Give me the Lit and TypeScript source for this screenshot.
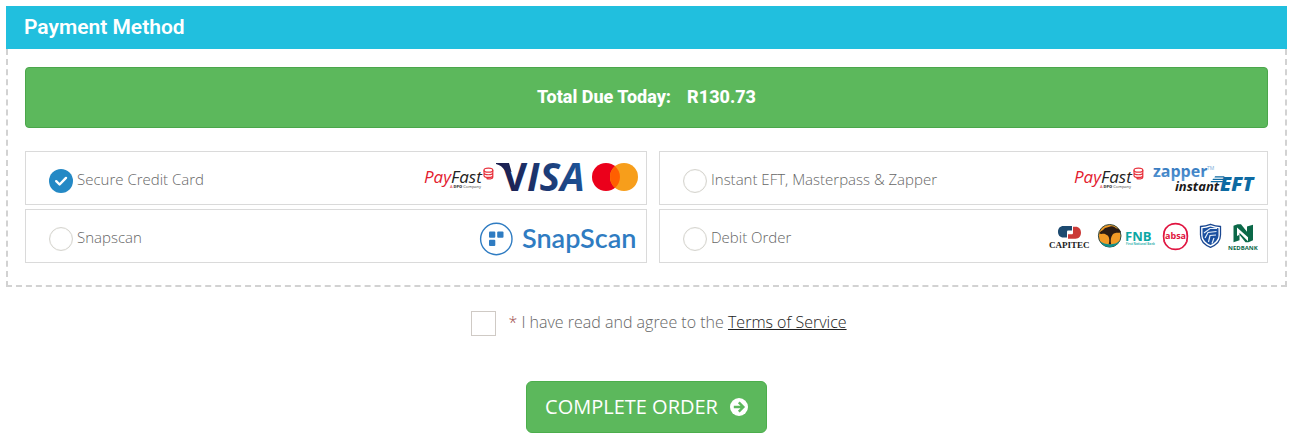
import { LitElement, html, svg, css } from "lit";
import { customElement, state } from "lit/decorators.js";

const payFast = svg`
  <text x="6" y="31" class="pf"><tspan fill="#e3202f">Pay</tspan><tspan fill="#222">Fast</tspan></text>
  <text x="32" y="36" class="tiny" fill="#444"><tspan fill="#e3202f">A</tspan> <tspan font-weight="800">DPO</tspan> Company</text>
  <g fill="none" stroke="#e8313c" stroke-width="1.2">
    <ellipse cx="70.4" cy="18.2" rx="4.4" ry="2" />
    <path d="M66 18.200v2.600c0 2.600 8.800 2.600 8.800 0v-2.600M66 21.400v2c0 2.600 8.800 2.600 8.800 0v-2.200M68.500 26.400c2 1 6.300.6 6.300-1.200v-1.600" />
  </g>`;

const cardLogos = html`<svg class="logo" width="220" height="52" viewBox="0 0 220 52" role="img" aria-label="PayFast, Visa, Mastercard">
  <defs>
    <linearGradient id="visa" gradientUnits="userSpaceOnUse" x1="84" x2="166" y1="39" y2="11">
      <stop offset="0" stop-color="#1c1c4c" />
      <stop offset="1" stop-color="#1d569b" />
    </linearGradient>
  </defs>
  ${payFast}
  <path d="M78 11h13l2.500 9-6.500-1.500C84.500 15 82 13 78 12z" fill="#1c1f50" />
  <g fill="url(#visa)">
    <text x="84" y="39" class="visa-v">V</text>
    <text x="109" y="39" class="visa">ISA</text>
  </g>
  <circle cx="188" cy="25" r="14" fill="#eb001b" />
  <circle cx="206" cy="25" r="14" fill="#f79e1b" />
  <path d="M197 14.300a14 14 0 0 1 0 21.400a14 14 0 0 1 0-21.400z" fill="#ff5f00" />
</svg>`;

const snapLogo = html`<svg class="logo" width="160" height="52" viewBox="0 0 160 52" role="img" aria-label="SnapScan">
  <circle cx="18.300" cy="29" r="15.700" fill="none" stroke="#2f7cc2" stroke-width="1.400" />
  <g fill="#2f7cc2">
    <rect x="11" y="21.500" width="6.300" height="6.300" rx="1" />
    <rect x="19.200" y="21.500" width="6.300" height="6.300" rx="1" />
    <rect x="11" y="29.800" width="6.300" height="6.300" rx="1" />
    <text x="44" y="38" class="snap">SnapScan</text>
  </g>
</svg>`;

const eftLogos = html`<svg class="logo" width="190" height="52" viewBox="0 0 190 52" role="img" aria-label="PayFast, Zapper, Instant EFT">
  <defs>
    <linearGradient id="zap" x1="0" x2="0" y1="0" y2="1">
      <stop offset="0" stop-color="#2369b4" />
      <stop offset="1" stop-color="#5c9bd6" />
    </linearGradient>
  </defs>
  <g transform="translate(-1 0)">${payFast}</g>
  <text x="84" y="25" class="zapper" fill="url(#zap)">zapper</text>
  <text x="138" y="18" class="tm" fill="#78add8">TM</text>
  <text x="106" y="39" class="instant" fill="#1a1a1a">instant</text>
  <g fill="#0e6aa2">
    <path d="M146 24.200h9.500l-.5 1.300h-9.500zM144 26.700h11l-.5 1.200h-11zM142 29.100h12l-.4 1.100h-12z" />
    <text x="151" y="39" class="eft">EFT</text>
  </g>
</svg>`;

const bankLogos = html`<svg class="logo" width="220" height="52" viewBox="0 0 220 52" role="img" aria-label="Capitec, FNB, Absa, Standard Bank, Nedbank">
  <path d="M24.500 16H33v4.500h-3.500c-1 0-1.500.4-1.500 1.500v5.500h-3.500c-3.600 0-5.500-2.500-5.500-5.800S21 16 24.500 16z" fill="#1d4a70" />
  <path d="M34 16.800h2.500c3.600 0 5.500 2.600 5.500 5.800 0 3.500-2 6.200-5.500 6.200H29v-4.500h3.500c1 0 1.500-.4 1.500-1.500z" fill="#cb3a37" />
  <text x="10" y="38" class="capitec" fill="#222">CAPITEC</text>

  <circle cx="70.700" cy="25.800" r="11.300" fill="#f19a26" stroke="#2f4a45" stroke-width="1" />
  <path d="M61 31.500c2 3.500 5.500 5.500 9.700 5.500c4.300 0 8-2.500 10-6l-4 2.500-6 1-5.500-1z" fill="#0d8f8d" />
  <path d="M60.500 23.500c.5-2.600 3-2.600 4-4 2-2.500 5-2 6.500-3 3-1 5 .5 6 1.800 2 .2 4.500 1.500 4.800 3.700-2 1.500-3.800.2-5.300 1-1.300.2-2 .8-3 1.700-1.700 2.300-2.100 5.500-1.400 9.500h-2.400c1-3.500.8-6.500-.7-8.500l-3-1.700c-1.500-.7-4 .5-5.500-.5z" fill="#2b1c14" />
  <text x="86" y="31" class="fnb" fill="#0aa7a4">FNB</text>
  <text x="87" y="35" class="micro" fill="#3db5b2">First National Bank</text>

  <path d="M125.200 21.500a12 12 0 0 1 22.600 0M125.200 31.500a12 12 0 0 0 22.600 0M125.200 21.500q-1.200 5 0 10M147.800 21.500q1.200 5 0 10" fill="none" stroke="#e01440" stroke-width="1.800" />
  <text x="126" y="29" class="absa" fill="#e01440">absa</text>

  <path d="M161.500 16.500q5-.2 10-2.200q5 2 10 2.200v8.500c0 6-5 10.300-10 12.300c-5-2-10-6.300-10-12.300z" fill="#fff" stroke="#1a4791" stroke-width="1.300" />
  <path d="M163.500 18.200q4-.2 8-1.800q4 1.600 8 1.800v7c0 4.500-4 8-8 9.800c-4-1.800-8-5.300-8-9.800z" fill="#1a4f9f" />
  <path d="M165 23l6-4.500h7M166 28l3-5.500 8.500-1M169.500 32l1.500-6.500 6-.5M173 33.500l2-5.500" fill="none" stroke="#e7f0fa" stroke-width="1.200" />

  <path d="M194.500 15.800l4-1.500h3.500l6 7.500v-5.300l6-1.700v15.500l-4.500 2h-3l-6-7.500v5.500l-6 2z" fill="#0b6848" />
  <path d="M198 17.500v8.500l2.500-1.200v-2l8.500 8.500v-4z" fill="#fff" />
  <text x="189" y="40" class="nedbank" fill="#0b6848">NEDBANK</text>
</svg>`;

const METHODS = [
  { id: "card", label: "Secure Credit Card", logo: cardLogos },
  { id: "eft", label: "Instant EFT, Masterpass & Zapper", logo: eftLogos },
  { id: "snapscan", label: "Snapscan", logo: snapLogo },
  { id: "debit", label: "Debit Order", logo: bankLogos },
];

@customElement("app-root")
export class AppRoot extends LitElement {
  @state() private method = "card";

  static styles = css`
    :host {
      display: block;
      padding: 6px 3px 9px 6px;
      background: #fff;
      font-family: "Open Sans", "Noto Sans", sans-serif;
      font-weight: 300;
      color: #666;
    }
    * { box-sizing: border-box; }
    .title {
      margin: 0;
      padding: 0 18px 1px;
      background: #21bfde;
      color: #fff;
      font: 600 21px/42px Roboto, sans-serif;
    }
    .panel {
      border: 2px dashed #d2d2d2;
      border-top: 0;
      padding: 18px 17px 22px;
    }
    .total {
      display: flex;
      justify-content: center;
      gap: 16px;
      margin-bottom: 23px;
      padding: 16px 17px 18px;
      border: 1px solid #4ba64b;
      border-radius: 4px;
      background: #5cb85c;
      color: #fff;
      font: 800 18px/25px Roboto, sans-serif;
    }
    .methods {
      display: grid;
      grid-template-columns: 622fr 609fr;
      gap: 4px 12px;
      margin: 0;
      padding: 0;
      border: 0;
    }
    .method {
      display: flex;
      align-items: center;
      min-width: 0;
      padding: 0 8px 0 23px;
      border: 1px solid #dadada;
      font-size: 15px;
      line-height: 20px;
      cursor: pointer;
    }
    .radio {
      appearance: none;
      flex: none;
      width: 24px;
      height: 24px;
      margin: 6px 4px 0 0;
      border: 1px solid #d6d5cf;
      border-radius: 50%;
      background: #fff;
      box-shadow: inset 0 0 1px #d6d5cf;
    }
    .radio:checked {
      border: 0;
      box-shadow: none;
      background: #2489c5 url("data:image/svg+xml,%3Csvg xmlns='http://www.w3.org/2000/svg' viewBox='0 0 24 24'%3E%3Cpath d='M7.200 12.200l3.400 3.300 6.400-6.600' fill='none' stroke='white' stroke-width='2.400' stroke-linecap='round' stroke-linejoin='round'/%3E%3C/svg%3E") center / 24px no-repeat;
    }
    .name { padding-top: 2px; }
    .logo { display: block; flex: none; margin-left: auto; overflow: visible; }
    .agree {
      display: flex;
      justify-content: center;
      align-items: center;
      margin: 24px 0 45px 25px;
      font-size: 16px;
      line-height: 22px;
    }
    .terms { padding-bottom: 3px; }
    .tick {
      appearance: none;
      width: 25px;
      height: 25px;
      margin: 0 12px 0 0;
      border: 1px solid #cfcac5;
      background: #fff;
    }
    .tick:checked { background: #2489c5; }
    .star { color: #a05050; }
    .link { color: #222; text-decoration: underline; }
    .actions { display: flex; justify-content: center; }
    .submit {
      display: flex;
      align-items: center;
      gap: 12px;
      padding: 0 18px;
      border: 1px solid #4cae4c;
      border-radius: 6px;
      background: #5cb85c;
      color: #fff;
      font: 400 20px/50px "Open Sans", sans-serif;
      cursor: pointer;
    }
    .arrow { display: block; }
    .pf { font: italic 400 17px "Open Sans", sans-serif; }
    .tiny { font: 500 4px "Open Sans", sans-serif; }
    .visa { font: italic 700 39px "Open Sans", sans-serif; }
    .visa-v { font: 700 39px "Open Sans", sans-serif; }
    .snap { font: 600 27px Lato, sans-serif; }
    .zapper { font: 700 16px "Open Sans", sans-serif; }
    .tm { font: 400 5px "Open Sans", sans-serif; }
    .instant { font: italic 700 13px "Open Sans", sans-serif; }
    .eft { font: italic 800 20px "Open Sans", sans-serif; }
    .capitec { font: 700 9px "Liberation Serif", serif; }
    .fnb { font: 700 13px "Open Sans", sans-serif; }
    .micro { font: 700 3px "Open Sans", sans-serif; }
    .absa { font: 700 9px "Open Sans", sans-serif; }
    .nedbank { font: 700 6px "Open Sans", sans-serif; }
    @media (max-width: 800px) {
      .methods { grid-template-columns: 1fr; }
    }
  `;

  render() {
    return html`
      <h2 class="title">Payment Method</h2>
      <div class="panel">
        <div class="total"><span>Total Due Today:</span><span>R130.73</span></div>
        <fieldset class="methods" aria-label="Payment Method">
          ${METHODS.map(
            (m) => html`<label class="method">
              <input
                class="radio"
                type="radio"
                name="method"
                .value=${m.id}
                .checked=${this.method === m.id}
                @change=${() => (this.method = m.id)}
              />
              <span class="name">${m.label}</span>
              ${m.logo}
            </label>`
          )}
        </fieldset>
      </div>
      <div class="agree">
        <input class="tick" type="checkbox" id="agree" />
        <label class="terms" for="agree"><span class="star">*</span> I have read and agree to the <a class="link" href="#terms">Terms of Service</a></label>
      </div>
      <div class="actions">
        <button class="submit" type="button">
          COMPLETE ORDER
          <svg class="arrow" width="18" height="18" viewBox="0 0 18 18" aria-hidden="true">
            <circle cx="9" cy="9" r="9" fill="#fff" />
            <path d="M3.800 9h9M8.800 4.300L13.400 9l-4.600 4.700" fill="none" stroke="#5cb85c" stroke-width="2.400" />
          </svg>
        </button>
      </div>
    `;
  }
}
